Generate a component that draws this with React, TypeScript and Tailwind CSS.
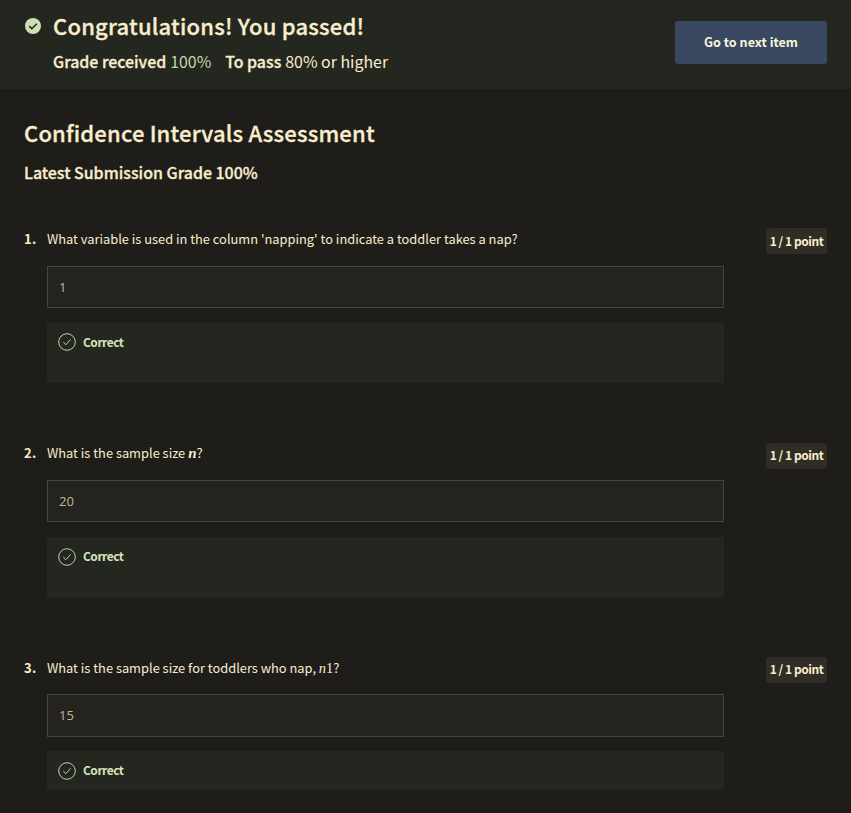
import type { ReactNode } from "react";

function CheckOutline() {
  return (
    <svg className="size-[18px] shrink-0" viewBox="0 0 18 18" fill="none" stroke="#c3cfae" strokeWidth="1">
      <circle cx="9" cy="9" r="8.3" />
      <path d="M5.3 9.2 7.9 11.7 12.6 6.4" />
    </svg>
  );
}

type QuestionProps = {
  number: string;
  answer: string;
  className: string;
  promptClass: string;
  inputClass: string;
  feedbackClass: string;
  labelClass: string;
  badgeClass: string;
  children: ReactNode;
};

function Question({
  number,
  answer,
  className,
  promptClass,
  inputClass,
  feedbackClass,
  labelClass,
  badgeClass,
  children,
}: QuestionProps) {
  return (
    <section className={`flex ${className}`}>
      <div className={`w-[23px] shrink-0 text-[13px] font-bold tracking-[0.4px] ${promptClass}`}>{number}.</div>
      <div className="w-[677px] shrink-0">
        <p className={`h-[22px] whitespace-nowrap text-[12.85px] ${promptClass}`}>{children}</p>
        <div
          className={`flex items-center border border-[#47443e] bg-[#252320] pl-[11px] font-['Open_Sans',sans-serif] text-[13px] text-[#c4b594] ${inputClass}`}
        >
          {answer}
        </div>
        <div className={`flex items-start gap-[7px] bg-[#242720] pl-[11px] ${feedbackClass}`}>
          <CheckOutline />
          <span className={`text-[12px] font-bold tracking-[-0.5px] text-[#d5e5b7] ${labelClass}`}>Correct</span>
        </div>
      </div>
      <div
        className={`ml-auto flex h-[26px] w-[61px] items-center justify-center whitespace-nowrap rounded-[3px] bg-[#302d27] text-[12px] font-bold tracking-[-0.45px] ${badgeClass}`}
      >
        1 / 1 point
      </div>
    </section>
  );
}

export default function App() {
  return (
    <div className="h-[813px] w-[851px] overflow-hidden bg-[#1f1d1a] font-['Noto_Sans_CJK_SC','Noto_Sans',sans-serif] text-[#f9edcd]">
      <header className="flex h-[89px] bg-[#242620] px-6">
        <svg className="ml-px mt-[18px] size-4 shrink-0" viewBox="0 0 16 16">
          <circle cx="8" cy="8" r="8" fill="#cfe0b0" />
          <path d="m4.2 8.2 2.6 2.5 5-5" fill="none" stroke="#242620" strokeWidth="1.6" />
        </svg>
        <div className="ml-3 whitespace-nowrap">
          <h1 className="mt-[9px] text-[22px] font-medium leading-8 tracking-[0.2px] [-webkit-text-stroke:0.3px]">
            Congratulations! You passed!
          </h1>
          <p className="mt-[9px] flex text-[15.9px] leading-6">
            <span className="font-medium [-webkit-text-stroke:0.3px]">Grade received</span>
            <span className="ml-1 text-[#c5d8a8]">100%</span>
            <span className="ml-[14px] font-medium [-webkit-text-stroke:0.3px]">To pass</span>
            <span className="ml-1">80% or higher</span>
          </p>
        </div>
        <button className="ml-auto mt-[21px] h-[43px] w-[152px] rounded-[3px] bg-[#374860] pb-px text-[12.6px] font-bold text-[#fbf3dc]">
          Go to next item
        </button>
      </header>
      <main className="px-6">
        <h2 className="mt-[27px] whitespace-nowrap text-[22px] font-medium leading-8 tracking-[0.18px] [-webkit-text-stroke:0.3px]">
          Confidence Intervals Assessment
        </h2>
        <h3 className="mt-[12px] text-[15.95px] font-medium leading-6 [-webkit-text-stroke:0.3px]">
          Latest Submission Grade 100%
        </h3>
        <Question
          number="1"
          answer="1"
          className="mt-[44px] h-[215px]"
          promptClass="leading-[22px]"
          inputClass="mt-4 h-[42px] pt-px"
          feedbackClass="mt-[15px] h-[60px] pt-[10px]"
          labelClass="leading-[18px]"
          badgeClass=""
        >
          What variable is used in the column 'napping' to indicate a toddler takes a nap?
        </Question>
        <Question
          number="2"
          answer="20"
          className="h-[214px]"
          promptClass="leading-5"
          inputClass="mt-[15px] h-[42px] pt-px"
          feedbackClass="mt-[15px] h-[61px] pt-[11px]"
          labelClass="leading-4"
          badgeClass="pb-0.5"
        >
          What is the sample size <b className="font-['Liberation_Serif',serif] text-[15px] leading-none italic">n</b>?
        </Question>
        <Question
          number="3"
          answer="15"
          className="h-[156px]"
          promptClass="leading-[22px]"
          inputClass="mt-[15px] h-[43px]"
          feedbackClass="mt-[14px] h-[39px] pt-[11px]"
          labelClass="leading-4"
          badgeClass="pb-0.5"
        >
          What is the sample size for toddlers who nap,{" "}
          <span className="font-['Liberation_Serif',serif] text-[14.5px] leading-none">
            <i>n</i>1
          </span>
          ?
        </Question>
      </main>
    </div>
  );
}
